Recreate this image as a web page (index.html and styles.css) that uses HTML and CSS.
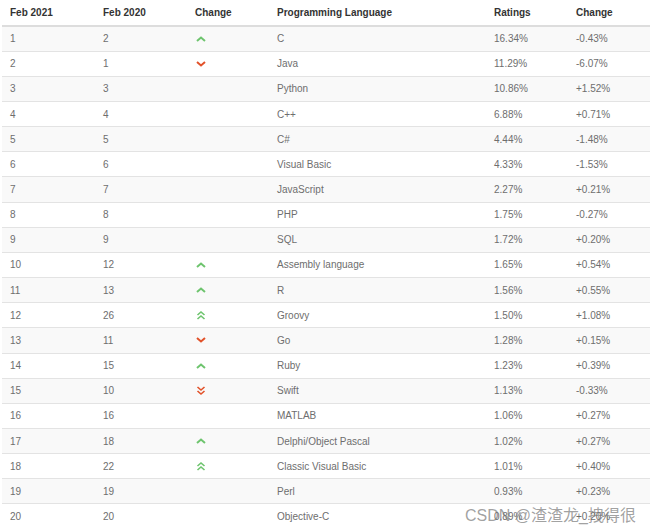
FILE: index.html
```html
<!DOCTYPE html>
<html>
<head>
<meta charset="utf-8">
<link rel="stylesheet" href="styles.css">
</head>
<body>
<div class="page">
<svg width="0" height="0" class="defs">
  <defs>
    <symbol id="up" viewBox="0 0 10 6"><path d="M1 5 L5 1.5 L9 5" fill="none" stroke="currentColor" stroke-width="2"/></symbol>
    <symbol id="down" viewBox="0 0 10 6"><path d="M1 1 L5 4.5 L9 1" fill="none" stroke="currentColor" stroke-width="2"/></symbol>
    <symbol id="up2" viewBox="0 0 10 10"><path d="M1.5 5 L5 2 L8.5 5 M1.5 9 L5 6 L8.5 9" fill="none" stroke="currentColor" stroke-width="1.6"/></symbol>
    <symbol id="down2" viewBox="0 0 10 10"><path d="M1.5 1 L5 4 L8.5 1 M1.5 5 L5 8 L8.5 5" fill="none" stroke="currentColor" stroke-width="1.6"/></symbol>
  </defs>
</svg>
<table class="tbl">
  <colgroup>
    <col class="c1"><col class="c2"><col class="c3"><col class="c4"><col class="c5"><col class="c6">
  </colgroup>
  <thead>
    <tr><th>Feb 2021</th><th>Feb 2020</th><th>Change</th><th>Programming Language</th><th>Ratings</th><th>Change</th></tr>
  </thead>
  <tbody>
    <tr><td>1</td><td>2</td><td><svg class="ic up" width="10" height="6"><use href="#up"/></svg></td><td>C</td><td>16.34%</td><td>-0.43%</td></tr>
    <tr><td>2</td><td>1</td><td><svg class="ic down" width="10" height="6"><use href="#down"/></svg></td><td>Java</td><td>11.29%</td><td>-6.07%</td></tr>
    <tr><td>3</td><td>3</td><td></td><td>Python</td><td>10.86%</td><td>+1.52%</td></tr>
    <tr><td>4</td><td>4</td><td></td><td>C++</td><td>6.88%</td><td>+0.71%</td></tr>
    <tr><td>5</td><td>5</td><td></td><td>C#</td><td>4.44%</td><td>-1.48%</td></tr>
    <tr><td>6</td><td>6</td><td></td><td>Visual Basic</td><td>4.33%</td><td>-1.53%</td></tr>
    <tr><td>7</td><td>7</td><td></td><td>JavaScript</td><td>2.27%</td><td>+0.21%</td></tr>
    <tr><td>8</td><td>8</td><td></td><td>PHP</td><td>1.75%</td><td>-0.27%</td></tr>
    <tr><td>9</td><td>9</td><td></td><td>SQL</td><td>1.72%</td><td>+0.20%</td></tr>
    <tr><td>10</td><td>12</td><td><svg class="ic up" width="10" height="6"><use href="#up"/></svg></td><td>Assembly language</td><td>1.65%</td><td>+0.54%</td></tr>
    <tr><td>11</td><td>13</td><td><svg class="ic up" width="10" height="6"><use href="#up"/></svg></td><td>R</td><td>1.56%</td><td>+0.55%</td></tr>
    <tr><td>12</td><td>26</td><td><svg class="ic up" width="10" height="10"><use href="#up2"/></svg></td><td>Groovy</td><td>1.50%</td><td>+1.08%</td></tr>
    <tr><td>13</td><td>11</td><td><svg class="ic down" width="10" height="6"><use href="#down"/></svg></td><td>Go</td><td>1.28%</td><td>+0.15%</td></tr>
    <tr><td>14</td><td>15</td><td><svg class="ic up" width="10" height="6"><use href="#up"/></svg></td><td>Ruby</td><td>1.23%</td><td>+0.39%</td></tr>
    <tr><td>15</td><td>10</td><td><svg class="ic down" width="10" height="10"><use href="#down2"/></svg></td><td>Swift</td><td>1.13%</td><td>-0.33%</td></tr>
    <tr><td>16</td><td>16</td><td></td><td>MATLAB</td><td>1.06%</td><td>+0.27%</td></tr>
    <tr><td>17</td><td>18</td><td><svg class="ic up" width="10" height="6"><use href="#up"/></svg></td><td>Delphi/Object Pascal</td><td>1.02%</td><td>+0.27%</td></tr>
    <tr><td>18</td><td>22</td><td><svg class="ic up" width="10" height="10"><use href="#up2"/></svg></td><td>Classic Visual Basic</td><td>1.01%</td><td>+0.40%</td></tr>
    <tr><td>19</td><td>19</td><td></td><td>Perl</td><td>0.93%</td><td>+0.23%</td></tr>
    <tr><td>20</td><td>20</td><td></td><td>Objective-C</td><td>0.89%</td><td>+0.20%</td></tr>
  </tbody>
</table>
<div class="watermark">CSDN @渣渣龙_拽得很</div>
</div>
</body>
</html>
```

FILE: styles.css
```css
html, body {
  margin: 0;
  padding: 0;
  background: #fff;
  overflow: hidden;
}
.page {
  position: relative;
  width: 650px;
  height: 528px;
  overflow: hidden;
  padding-left: 2px;
  box-sizing: border-box;
}
.defs {
  position: absolute;
}
.tbl {
  border-collapse: collapse;
  table-layout: fixed;
  width: 648px;
  font-family: "Liberation Sans", Arial, sans-serif;
  font-size: 10px;
  color: #6e6e6e;
}
.c1 { width: 93px; }
.c2 { width: 92px; }
.c3 { width: 82px; }
.c4 { width: 217px; }
.c5 { width: 82px; }
.c6 { width: 82px; }
.tbl th {
  text-align: left;
  font-weight: bold;
  color: #333;
  height: 26px;
  padding: 0 8px 1px;
  border-bottom: 2px solid #ddd;
  box-sizing: border-box;
  vertical-align: middle;
}
.tbl td {
  height: 25.16px;
  padding: 0 8px;
  border-top: 1px solid #e3e3e3;
  box-sizing: border-box;
  vertical-align: middle;
  white-space: nowrap;
}
.tbl thead + tbody tr:first-child td {
  border-top: 0;
}
.tbl tbody tr:nth-child(odd) td {
  background: #f9f9f9;
}
.ic {
  display: block;
  margin-left: 1px;
}
.up { color: #6ec46e; }
.down { color: #e2522a; }
.watermark {
  position: absolute;
  left: 465px;
  top: 505px;
  font-family: "Liberation Sans", "Noto Sans CJK SC", sans-serif;
  font-size: 16px;
  line-height: 22px;
  color: rgba(120, 120, 120, 0.7);
  white-space: nowrap;
}
```
